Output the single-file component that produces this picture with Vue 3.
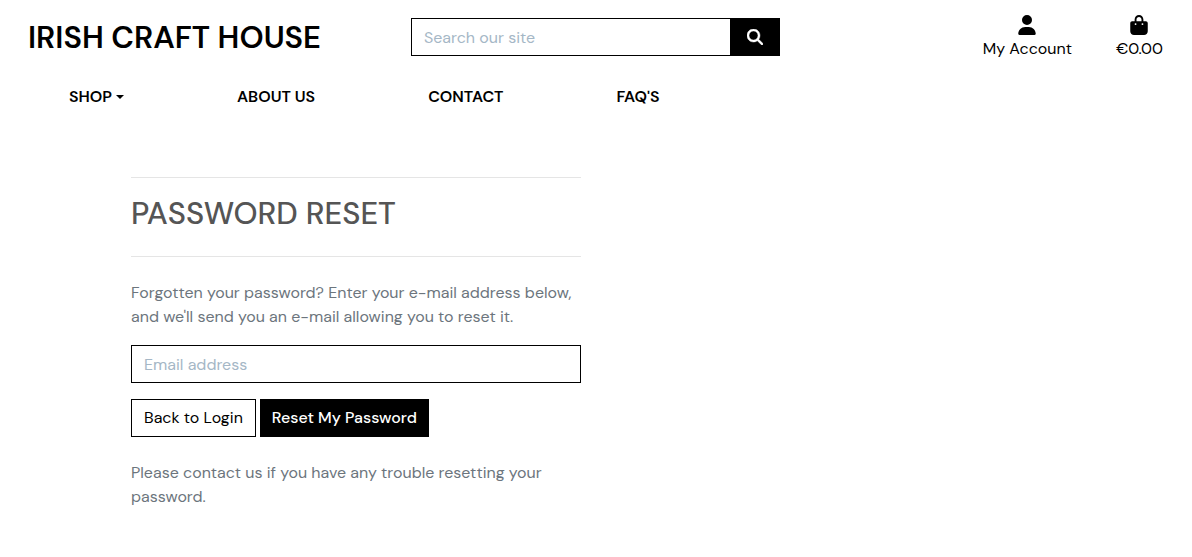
<script setup>
import { ref } from 'vue'

const query = ref('')
const email = ref('')
const links = ['ABOUT US', 'CONTACT', "FAQ'S"]
</script>

<template>
  <div class="page">
    <header class="top">
      <a class="brand" href="#">IRISH CRAFT HOUSE</a>
      <form class="search" role="search" @submit.prevent>
        <input v-model="query" type="text" aria-label="Search our site" placeholder="Search our site">
        <button type="submit" aria-label="Search">
          <svg viewBox="0 0 512 512" width="16" height="16" fill="currentColor" aria-hidden="true">
            <path d="M416 208c0 45.900-14.900 88.300-40 122.700L502.600 457.400c12.500 12.500 12.500 32.800 0 45.300s-32.800 12.500-45.300 0L330.700 376c-34.400 25.200-76.800 40-122.700 40C93.100 416 0 322.900 0 208S93.100 0 208 0S416 93.100 416 208zM208 352a144 144 0 1 0 0-288 144 144 0 1 0 0 288z" stroke="currentColor" stroke-width="14" />
          </svg>
        </button>
      </form>
      <div class="tools">
        <a class="tool" href="#">
          <svg viewBox="0 0 448 512" width="18" height="20" fill="currentColor" aria-hidden="true">
            <path d="M224 256A128 128 0 1 0 224 0a128 128 0 1 0 0 256zm-45.700 48C79.800 304 0 383.800 0 482.300C0 498.700 13.300 512 29.700 512H418.300c16.400 0 29.700-13.300 29.700-29.700C448 383.800 368.200 304 269.700 304H178.300z" />
          </svg>
          <span>My Account</span>
        </a>
        <a class="tool" href="#">
          <svg viewBox="0 0 448 512" width="18" height="20" fill="currentColor" aria-hidden="true">
            <path d="M160 112c0-35.300 28.700-64 64-64s64 28.700 64 64v48H160V112zm-48 48H48c-26.500 0-48 21.500-48 48V416c0 53 43 96 96 96H352c53 0 96-43 96-96V208c0-26.500-21.500-48-48-48H336V112C336 50.100 285.900 0 224 0S112 50.100 112 112v48zm24 48a24 24 0 1 1 0 48 24 24 0 1 1 0-48zm152 24a24 24 0 1 1 48 0 24 24 0 1 1-48 0z" />
          </svg>
          <span>€0.00</span>
        </a>
      </div>
    </header>

    <nav class="menu" aria-label="Main">
      <button class="shop" type="button" aria-haspopup="true">SHOP<span class="caret" /></button>
      <a v-for="link in links" :key="link" href="#">{{ link }}</a>
    </nav>

    <main class="content">
      <hr>
      <h2>PASSWORD RESET</h2>
      <hr>
      <p class="intro">Forgotten your password? Enter your e-mail address below, and we'll send you an e-mail allowing you to reset it.</p>
      <form @submit.prevent>
        <input v-model="email" class="email" type="email" aria-label="Email address" placeholder="Email address">
        <div class="actions">
          <a class="btn" href="#">Back to Login</a>
          <button class="btn dark" type="submit">Reset My Password</button>
        </div>
      </form>
      <p class="help">Please contact us if you have any trouble resetting your password.</p>
    </main>
  </div>
</template>

<style>
body {
  margin: 0;
  background: #fff;
}
</style>

<style scoped>
.page,
.page input,
.page button {
  font-family: "DM Sans", Inter, "Open Sans", sans-serif;
  font-size: 16px;
  line-height: 24px;
}
.page * {
  box-sizing: border-box;
}
.page {
  color: #000;
}
a {
  color: inherit;
  text-decoration: none;
}
.top {
  display: grid;
  grid-template-columns: minmax(320px, 383fr) minmax(200px, 369fr) 383fr;
  align-items: start;
  padding: 13px 29px 0 28px;
}
.brand {
  font-size: 31px;
  line-height: 50px;
  font-weight: 600;
  white-space: nowrap;
}
.search {
  display: flex;
  margin-top: 5px;
}
.search input {
  flex: 1;
  min-width: 0;
  border-right: 0;
}
input {
  height: 38px;
  padding: 6px 12px;
  border: 1px solid #000;
  border-radius: 0;
  color: #000;
  background: #fff;
  outline: none;
}
input::placeholder {
  color: #a5b7c6;
  opacity: 1;
}
.search button {
  display: grid;
  place-items: center;
  width: 50px;
  height: 38px;
  padding: 0;
  border: 0;
  color: #fff;
  background: #000;
}
.tools {
  display: flex;
  justify-content: flex-end;
  gap: 44px;
}
.tool {
  display: flex;
  flex-direction: column;
  align-items: center;
  padding-top: 2px;
  white-space: nowrap;
}
.tool svg {
  display: block;
  margin-bottom: 2px;
}
.menu {
  display: flex;
  gap: 113px;
  padding: 22px 69px 0;
}
.menu a,
.shop {
  font-weight: 600;
}
.shop {
  display: flex;
  align-items: center;
  gap: 4px;
  padding: 0;
  border: 0;
  color: #000;
  background: none;
}
.caret {
  border-top: 4px solid #000;
  border-right: 4px solid transparent;
  border-left: 4px solid transparent;
}
.content {
  max-width: 450px;
  margin: 68px 16px 0 131px;
  color: #6c757d;
}
hr {
  height: 1px;
  margin: 0;
  border: 0;
  background: #e5e5e5;
}
h2 {
  margin: 16px 0 22px;
  color: #555;
  font-size: 31px;
  line-height: 40px;
  font-weight: 500;
}
p {
  margin: 0;
}
.intro {
  margin: 24px 0 16px;
}
.email {
  display: block;
  width: 100%;
}
.actions {
  display: flex;
  gap: 4px;
  margin: 16px 0 24px;
}
.btn {
  height: 38px;
  padding: 6px 12px;
  border: 1px solid #000;
  color: #000;
  background: #fff;
  white-space: nowrap;
}
.page .btn.dark {
  padding: 6px 11px;
  color: #fff;
  background: #000;
  font-weight: 500;
}
</style>
